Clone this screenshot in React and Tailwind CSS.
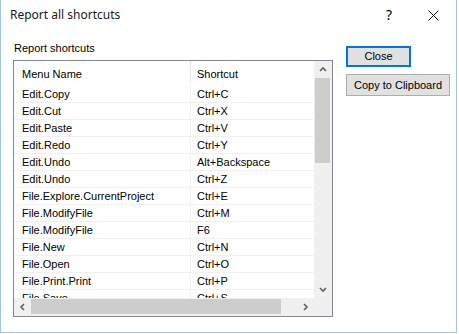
import React from 'react';

const rows = [
  ['Edit.Copy', 'Ctrl+C'],
  ['Edit.Cut', 'Ctrl+X'],
  ['Edit.Paste', 'Ctrl+V'],
  ['Edit.Redo', 'Ctrl+Y'],
  ['Edit.Undo', 'Alt+Backspace'],
  ['Edit.Undo', 'Ctrl+Z'],
  ['File.Explore.CurrentProject', 'Ctrl+E'],
  ['File.ModifyFile', 'Ctrl+M'],
  ['File.ModifyFile', 'F6'],
  ['File.New', 'Ctrl+N'],
  ['File.Open', 'Ctrl+O'],
  ['File.Print.Print', 'Ctrl+P'],
  ['File.Save', 'Ctrl+S'],
];

function Chevron({ dir }) {
  // small scrollbar arrow glyph
  const d = {
    up: 'M1 5 L4 2 L7 5',
    down: 'M1 2 L4 5 L7 2',
    left: 'M5 1 L2 4 L5 7',
    right: 'M2 1 L5 4 L2 7',
  }[dir];
  return (
    <svg width="8" height="8" viewBox="0 0 8 8">
      <path d={d} fill="none" stroke="#606060" strokeWidth="1.6" />
    </svg>
  );
}

export default function App() {
  return (
    <div className="w-[459px] h-[334px] bg-white text-black" style={{ fontFamily: '"Liberation Sans", Arial, sans-serif' }}>
      <div className="w-[457px] h-[333px] border-l border-r border-b border-[#a3c5ea] flex flex-col">
        {/* Title bar */}
        <div className="h-[30px] flex items-center pl-[9px] shrink-0">
          <span className="text-[12px] text-[#1a1a1a]" style={{ fontFamily: '"Noto Sans", sans-serif' }}>Report all shortcuts</span>
          <span className="ml-auto mr-[36px] text-[14px] leading-none" style={{ fontFamily: '"Noto Sans", sans-serif' }}>?</span>
          <svg width="11" height="11" viewBox="0 0 11 11" className="mr-[17px]">
            <path d="M0.5 0.5 L10.5 10.5 M10.5 0.5 L0.5 10.5" stroke="#111" strokeWidth="1" />
          </svg>
        </div>

        {/* Body */}
        <div className="flex pl-[12px] pt-[12px] gap-[13px]">
          <div className="flex flex-col">
            <div className="text-[11px] leading-[13px] pl-[1px] mb-[5px]">Report shortcuts</div>
            <div className="w-[320px] h-[257px] border border-[#828790] flex flex-col bg-white">
              <div className="flex h-[237px]">
                <div className="w-[300px] overflow-hidden">
                  <div className="h-[25px] flex text-[11px]">
                    <div className="w-[177px] h-[21px] border-r border-[#e5e5e5] pl-[8px] pt-[5px]">Menu Name</div>
                    <div className="pl-[6px] pt-[5px]">Shortcut</div>
                  </div>
                  {rows.map(([name, key], i) => (
                    <div key={i} className="flex h-[17px] border-b border-[#f0f0f0] text-[11px] leading-[17px]">
                      <div className="w-[177px] border-r border-[#f0f0f0] pl-[8px] whitespace-nowrap">{name}</div>
                      <div className="pl-[6px] whitespace-nowrap">{key}</div>
                    </div>
                  ))}
                </div>
                {/* Vertical scrollbar */}
                <div className="w-[18px] bg-[#f0f0f0] flex flex-col">
                  <div className="h-[17px] flex items-center justify-center"><Chevron dir="up" /></div>
                  <div className="h-[85px] bg-[#cdcdcd] ml-[1px] mr-[2px]"></div>
                  <div className="flex-1"></div>
                  <div className="h-[17px] flex items-center justify-center"><Chevron dir="down" /></div>
                </div>
              </div>
              {/* Horizontal scrollbar */}
              <div className="flex h-[18px] bg-[#f0f0f0]">
                <div className="w-[17px] flex items-center justify-center"><Chevron dir="left" /></div>
                <div className="w-[250px] bg-[#cdcdcd] mt-[1px] mb-[2px]"></div>
                <div className="w-[16px]"></div>
                <div className="w-[17px] flex items-center justify-center"><Chevron dir="right" /></div>
                <div className="flex-1"></div>
              </div>
            </div>
          </div>

          <div className="flex flex-col gap-[7px] pt-[4px]">
            <button className="w-[65px] h-[21px] border-2 border-[#0078d7] bg-[#e1e1e1] text-[11px] leading-none">Close</button>
            <button className="w-[104px] h-[22px] border border-[#adadad] bg-[#e1e1e1] text-[11px] leading-none">Copy to Clipboard</button>
          </div>
        </div>
      </div>
    </div>
  );
}
